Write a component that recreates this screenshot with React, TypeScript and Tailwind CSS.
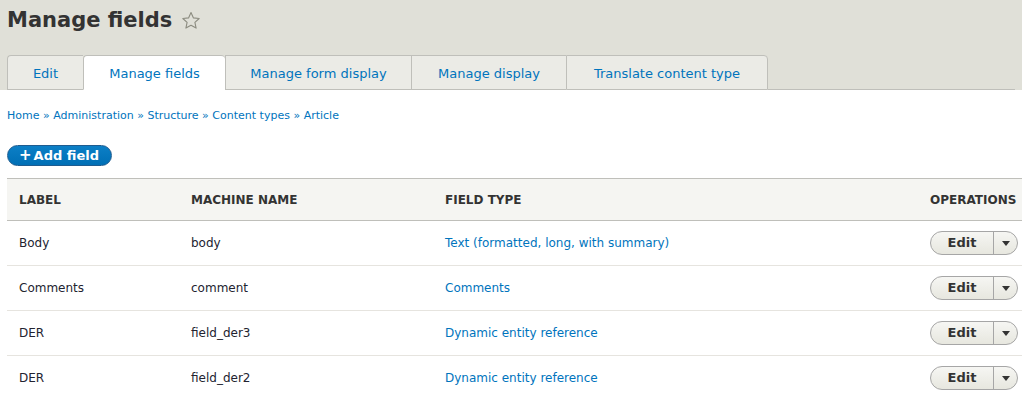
const tabs = [
  { label: "Edit", active: false, w: "w-[76px]" },
  { label: "Manage fields", active: true, w: "w-[142px]" },
  { label: "Manage form display", active: false, w: "w-[186px]" },
  { label: "Manage display", active: false, w: "w-[155px]" },
  { label: "Translate content type", active: false, w: "w-[202px]" },
];

const crumbs = ["Home", "Administration", "Structure", "Content types", "Article"];

const rows = [
  { label: "Body", machine: "body", type: "Text (formatted, long, with summary)" },
  { label: "Comments", machine: "comment", type: "Comments" },
  { label: "DER", machine: "field_der3", type: "Dynamic entity reference" },
  { label: "DER", machine: "field_der2", type: "Dynamic entity reference" },
];

function Star() {
  return (
    <svg width="20" height="20" viewBox="0 0 20 20" className="ml-[9px] mt-[2px]">
      <path
        d="M10 1.6l2.45 5.3 5.75.6-4.3 3.9 1.2 5.7L10 14.2l-5.1 2.9 1.2-5.7-4.3-3.9 5.75-.6z"
        fill="none"
        stroke="#8c8c80"
        strokeWidth="1.1"
        strokeLinejoin="round"
      />
    </svg>
  );
}

function DropButton() {
  return (
    <div className="flex h-[24px] w-[88px] items-stretch rounded-full border border-[#a6a6a6] bg-gradient-to-b from-[#f6f6f3] to-[#e7e7df] text-[13px]">
      <span className="flex flex-1 items-center justify-center font-bold text-[#333]">Edit</span>
      <span className="flex w-[24px] items-center justify-center border-l border-[#a6a6a6]">
        <svg width="8" height="5" viewBox="0 0 8 5">
          <path d="M0 0h8L4 5z" fill="#333" />
        </svg>
      </span>
    </div>
  );
}

export default function App() {
  return (
    <div className="h-[393px] w-full overflow-hidden bg-white font-['DejaVu_Sans',sans-serif] text-[12px] text-[#222330]">
      <div className="bg-[#e0e0d8] px-[7px] pt-[6px]">
        <div className="flex items-center">
          <h1 className="text-[21px] font-bold leading-[28px] text-[#333]">Manage fields</h1>
          <Star />
        </div>
        <ul className="mt-[21px] flex text-[13px]">
          {tabs.map((t, i) => (
            <li
              key={t.label}
              className={
                "flex h-[35px] shrink-0 items-center justify-center border-l border-t border-[#bfbfba] pt-[2px] text-[#0074bd] " +
                t.w +
                " " +
                (t.active ? "rounded-t-[4px] border-b border-b-white bg-white " : "border-b bg-[#ebebe6] ") +
                (i === 0 ? "rounded-tl-[4px] " : "") +
                (i === tabs.length - 1 ? "rounded-tr-[4px] border-r " : "")
              }
            >
              {t.label}
            </li>
          ))}
          <li className="flex-1 border-b border-[#bfbfba]" />
        </ul>
      </div>

      <div className="px-[7px]">
        <nav className="mt-[19px] text-[11px] leading-[14px] text-[#0074bd]">
          {crumbs.map((c, i) => (
            <span key={c}>
              {i > 0 && <span className="text-[#0074bd]"> » </span>}
              <a>{c}</a>
            </span>
          ))}
        </nav>

        <div className="mt-[22px]">
          <span className="inline-flex h-[21px] items-center rounded-full border border-[#1e5c90] bg-gradient-to-b from-[#0c7fc6] to-[#006fb5] pl-[11px] pr-[12px] text-[13px] font-bold text-white">
            <span className="mr-[2px] text-[15px] leading-none">+</span>Add field
          </span>
        </div>

        <table className="mt-[12px] w-[1100px] table-fixed border-collapse">
          <thead>
            <tr className="h-[42px] border-y border-[#bfbfba] bg-[#f5f5f2] text-left text-[12px] font-bold uppercase text-[#333]">
              <th className="w-[172px] px-[12px]">Label</th>
              <th className="w-[254px] px-[12px]">Machine name</th>
              <th className="w-[485px] px-[12px]">Field type</th>
              <th className="px-[12px]">Operations</th>
            </tr>
          </thead>
          <tbody>
            {rows.map((r) => (
              <tr key={r.machine} className="h-[45px] border-b border-[#e6e4df]">
                <td className="px-[12px]">{r.label}</td>
                <td className="px-[12px]">{r.machine}</td>
                <td className="px-[12px] text-[#0074bd]">{r.type}</td>
                <td className="px-[12px]">
                  <DropButton />
                </td>
              </tr>
            ))}
          </tbody>
        </table>
      </div>
    </div>
  );
}
